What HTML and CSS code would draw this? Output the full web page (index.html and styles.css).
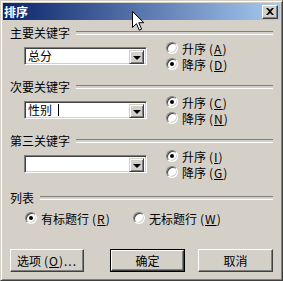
FILE: index.html
```html
<!DOCTYPE html>
<html lang="zh-CN">
<head>
<meta charset="utf-8">
<title>排序</title>
<link rel="stylesheet" href="styles.css">
</head>
<body>
<div class="window">
  <div class="titlebar">
    <span class="title">排序</span>
    <span class="close"><svg width="8" height="7" viewBox="0 0 8 7"><path d="M0 0h2l2 2 2-2h2L5 3.5 8 7H6L4 5 2 7H0l3-3.5z" fill="#000"/></svg></span>
  </div>
  <div class="content">
    <div class="group">
      <div class="legend"><span>主要关键字</span></div>
      <div class="keyrow">
        <div class="combo"><div class="field">总分</div><div class="drop"><span class="tri"></span></div></div>
        <div class="radios">
          <div class="radio"><span class="dot"></span>升序<span class="key">(<u>A</u>)</span></div>
          <div class="radio"><span class="dot on"></span>降序<span class="key">(<u>D</u>)</span></div>
        </div>
      </div>
    </div>
    <div class="group">
      <div class="legend"><span>次要关键字</span></div>
      <div class="keyrow">
        <div class="combo"><div class="field">性别<span class="caret"></span></div><div class="drop"><span class="tri"></span></div></div>
        <div class="radios">
          <div class="radio"><span class="dot on"></span>升序<span class="key">(<u>C</u>)</span></div>
          <div class="radio"><span class="dot"></span>降序<span class="key">(<u>N</u>)</span></div>
        </div>
      </div>
    </div>
    <div class="group">
      <div class="legend"><span>第三关键字</span></div>
      <div class="keyrow">
        <div class="combo"><div class="field"></div><div class="drop"><span class="tri"></span></div></div>
        <div class="radios">
          <div class="radio"><span class="dot on"></span>升序<span class="key">(<u>I</u>)</span></div>
          <div class="radio"><span class="dot"></span>降序<span class="key">(<u>G</u>)</span></div>
        </div>
      </div>
    </div>
    <div class="group list">
      <div class="legend"><span>列表</span></div>
      <div class="listrow">
        <div class="radio first"><span class="dot on"></span>有标题行<span class="key">(<u>R</u>)</span></div>
        <div class="radio"><span class="dot"></span>无标题行<span class="key">(<u>W</u>)</span></div>
      </div>
    </div>
    <div class="buttons">
      <div class="btn opt">选项<span class="key">(<u>O</u>)...</span></div>
      <div class="btn default"><span class="inner">确定</span></div>
      <div class="btn cancel">取消</div>
    </div>
  </div>
  <svg class="pointer" width="13" height="20" viewBox="0 0 13 20"><path d="M0.5 0.5V16.5L4.5 12.7L7.3 19.2L9.6 18.2L6.8 11.7H11.8Z" fill="#fff" stroke="#000" stroke-width="1"/></svg>
</div>
</body>
</html>
```
FILE: styles.css
```css
* { box-sizing: border-box; }
body {
  margin: 0;
  background: #d4d0c8;
  font-family: "Noto Sans CJK SC", "Noto Sans", sans-serif;
  font-size: 12px;
  color: #000;
}
.window {
  position: relative;
  width: 283px;
  height: 281px;
  padding: 2px;
  background: #d4d0c8;
  border: 1px solid;
  border-color: #d4d0c8 #404040 #404040 #d4d0c8;
  box-shadow: inset 1px 1px #fff, inset -1px -1px #808080;
}
.titlebar {
  height: 17px;
  display: flex;
  align-items: center;
  justify-content: space-between;
  padding: 0 2px 0 1px;
  background: linear-gradient(to right, #0a246a, #a6caf0);
}
.title {
  color: #fff;
  font-weight: bold;
  line-height: 17px;
}
.close {
  width: 16px;
  height: 14px;
  display: flex;
  align-items: center;
  justify-content: center;
  background: #d4d0c8;
  border: 1px solid;
  border-color: #fff #404040 #404040 #fff;
  box-shadow: inset -1px -1px #808080;
}
.content {
  padding: 6px 7px 0 7px;
}
.legend {
  display: flex;
  align-items: center;
  height: 14px;
  line-height: 14px;
}
.legend::after {
  content: "";
  flex: 1;
  height: 2px;
  margin-left: 6px;
  border-top: 1px solid #808080;
  border-bottom: 1px solid #fff;
}
.group + .group { margin-top: 8px; }
.group.list { margin-top: 11px; }
.keyrow {
  display: flex;
  align-items: center;
  height: 32px;
  padding-left: 14px;
}
.combo {
  width: 123px;
  height: 18px;
  display: flex;
  padding: 2px;
  background: #fff;
  border: 1px solid;
  border-color: #808080 #fff #fff #808080;
  box-shadow: inset 1px 1px #404040, inset -1px -1px #d4d0c8;
}
.field {
  flex: 1;
  line-height: 14px;
  padding-left: 1px;
  display: flex;
  align-items: center;
}
.caret {
  display: inline-block;
  width: 1px;
  height: 12px;
  background: #000;
  margin-left: 6px;
}
.drop {
  width: 15px;
  height: 14px;
  display: flex;
  align-items: center;
  justify-content: center;
  background: #d4d0c8;
  border: 1px solid;
  border-color: #d4d0c8 #404040 #404040 #d4d0c8;
  box-shadow: inset 1px 1px #fff, inset -1px -1px #808080;
}
.tri {
  width: 0;
  height: 0;
  border-left: 4px solid transparent;
  border-right: 4px solid transparent;
  border-top: 4px solid #000;
  margin-top: 1px;
}
.radios {
  margin-left: 19px;
  display: flex;
  flex-direction: column;
}
.radio {
  height: 16px;
  display: flex;
  align-items: center;
  white-space: nowrap;
}
.key {
  margin-left: 3px;
  letter-spacing: 1px;
}
.dot {
  position: relative;
  width: 12px;
  height: 12px;
  margin-right: 4px;
  border-radius: 50%;
  background: #fff;
  border: 1px solid;
  border-color: #808080 #fff #fff #808080;
  box-shadow: inset 1px 1px #404040, inset -1px -1px #d4d0c8;
}
.dot.on::after {
  content: "";
  position: absolute;
  left: 3px;
  top: 3px;
  width: 4px;
  height: 4px;
  border-radius: 50%;
  background: #000;
}
.listrow {
  display: flex;
  height: 16px;
  margin-top: 5px;
  padding-left: 15px;
}
.radio.first { width: 108px; }
.buttons {
  display: flex;
  margin-top: 23px;
}
.btn {
  height: 23px;
  width: 75px;
  display: flex;
  align-items: center;
  justify-content: center;
  background: #d4d0c8;
  border: 1px solid;
  border-color: #fff #404040 #404040 #fff;
  box-shadow: inset -1px -1px #808080;
}
.btn.opt { width: 74px; }
.btn.default {
  margin-left: 26px;
  border: 1px solid #000;
  box-shadow: none;
  padding: 0;
}
.btn.default .inner {
  width: 100%;
  height: 100%;
  display: flex;
  align-items: center;
  justify-content: center;
  border: 1px solid;
  border-color: #fff #404040 #404040 #fff;
  box-shadow: inset -1px -1px #808080;
}
.btn.cancel { margin-left: 13px; }
.pointer {
  position: absolute;
  left: 131px;
  top: 10px;
}
```
